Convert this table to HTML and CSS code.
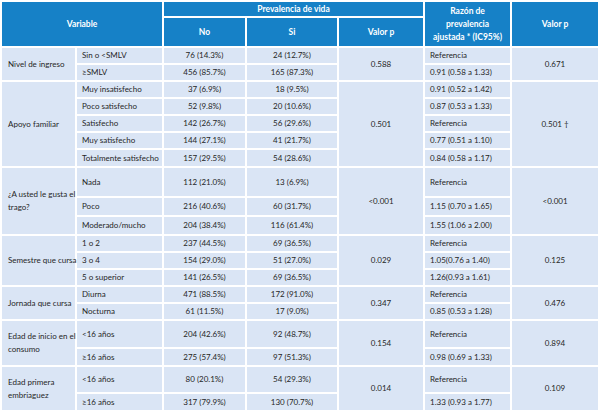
FILE: index.html
```html
<!DOCTYPE html>
<html lang="es">
<head>
<meta charset="utf-8">
<title>Tabla</title>
<link rel="stylesheet" href="styles.css">
</head>
<body>
<table class="t">
  <colgroup>
    <col class="c1"><col class="c2"><col class="c3"><col class="c4"><col class="c5"><col class="c6"><col class="c7">
  </colgroup>
  <thead>
    <tr class="hr1">
      <th colspan="2" rowspan="2">Variable</th>
      <th colspan="3">Prevalencia de vida</th>
      <th rowspan="2" class="raz">Razón de<br>prevalencia<br>ajustada * (IC95%)</th>
      <th rowspan="2">Valor p</th>
    </tr>
    <tr class="hr2">
      <th>No</th>
      <th>Si</th>
      <th>Valor p</th>
    </tr>
  </thead>
  <tbody>
    <tr class="r15">
      <td rowspan="2" class="var">Nivel de ingreso</td>
      <td class="cat">Sin o &lt;SMLV</td>
      <td class="num">76 (14.3%)</td>
      <td class="num">24 (12.7%)</td>
      <td rowspan="2" class="num">0.588</td>
      <td class="cat">Referencia</td>
      <td rowspan="2" class="num">0.671</td>
    </tr>
    <tr class="r15">
      <td class="cat">≥SMLV</td>
      <td class="num">456 (85.7%)</td>
      <td class="num">165 (87.3%)</td>
      <td class="cat">0.91 (0.58 a 1.33)</td>
    </tr>

    <tr class="r15">
      <td rowspan="5" class="var">Apoyo familiar</td>
      <td class="cat">Muy insatisfecho</td>
      <td class="num">37 (6.9%)</td>
      <td class="num">18 (9.5%)</td>
      <td rowspan="5" class="num">0.501</td>
      <td class="cat">0.91 (0.52 a 1.42)</td>
      <td rowspan="5" class="num">0.501 †</td>
    </tr>
    <tr class="r15">
      <td class="cat">Poco satisfecho</td>
      <td class="num">52 (9.8%)</td>
      <td class="num">20 (10.6%)</td>
      <td class="cat">0.87 (0.53 a 1.33)</td>
    </tr>
    <tr class="r15">
      <td class="cat">Satisfecho</td>
      <td class="num">142 (26.7%)</td>
      <td class="num">56 (29.6%)</td>
      <td class="cat">Referencia</td>
    </tr>
    <tr class="r15">
      <td class="cat">Muy satisfecho</td>
      <td class="num">144 (27.1%)</td>
      <td class="num">41 (21.7%)</td>
      <td class="cat">0.77 (0.51 a 1.10)</td>
    </tr>
    <tr class="r16">
      <td class="cat">Totalmente satisfecho</td>
      <td class="num">157 (29.5%)</td>
      <td class="num">54 (28.6%)</td>
      <td class="cat">0.84 (0.58 a 1.17)</td>
    </tr>

    <tr class="r28">
      <td rowspan="3" class="var">¿A usted le gusta el<br>trago?</td>
      <td class="cat">Nada</td>
      <td class="num">112 (21.0%)</td>
      <td class="num">13 (6.9%)</td>
      <td rowspan="3" class="num">&lt;0.001</td>
      <td class="cat">Referencia</td>
      <td rowspan="3" class="num">&lt;0.001</td>
    </tr>
    <tr class="r17">
      <td class="cat">Poco</td>
      <td class="num">216 (40.6%)</td>
      <td class="num">60 (31.7%)</td>
      <td class="cat">1.15 (0.70 a 1.65)</td>
    </tr>
    <tr class="r17">
      <td class="cat">Moderado/mucho</td>
      <td class="num">204 (38.4%)</td>
      <td class="num">116 (61.4%)</td>
      <td class="cat">1.55 (1.06 a 2.00)</td>
    </tr>

    <tr class="r15">
      <td rowspan="3" class="var">Semestre que cursa</td>
      <td class="cat">1 o 2</td>
      <td class="num">237 (44.5%)</td>
      <td class="num">69 (36.5%)</td>
      <td rowspan="3" class="num">0.029</td>
      <td class="cat">Referencia</td>
      <td rowspan="3" class="num">0.125</td>
    </tr>
    <tr class="r15">
      <td class="cat">3 o 4</td>
      <td class="num">154 (29.0%)</td>
      <td class="num">51 (27.0%)</td>
      <td class="cat">1.05(0.76 a 1.40)</td>
    </tr>
    <tr class="r15">
      <td class="cat">5 o superior</td>
      <td class="num">141 (26.5%)</td>
      <td class="num">69 (36.5%)</td>
      <td class="cat">1.26(0.93 a 1.61)</td>
    </tr>

    <tr class="r15">
      <td rowspan="2" class="var">Jornada que cursa</td>
      <td class="cat">Diurna</td>
      <td class="num">471 (88.5%)</td>
      <td class="num">172 (91.0%)</td>
      <td rowspan="2" class="num">0.347</td>
      <td class="cat">Referencia</td>
      <td rowspan="2" class="num">0.476</td>
    </tr>
    <tr class="r15">
      <td class="cat">Nocturna</td>
      <td class="num">61 (11.5%)</td>
      <td class="num">17 (9.0%)</td>
      <td class="cat">0.85 (0.53 a 1.28)</td>
    </tr>

    <tr class="r26">
      <td rowspan="2" class="var">Edad de inicio en el<br>consumo</td>
      <td class="cat">&lt;16 años</td>
      <td class="num">204 (42.6%)</td>
      <td class="num">92 (48.7%)</td>
      <td rowspan="2" class="num">0.154</td>
      <td class="cat">Referencia</td>
      <td rowspan="2" class="num">0.894</td>
    </tr>
    <tr class="r16">
      <td class="cat">≥16 años</td>
      <td class="num">275 (57.4%)</td>
      <td class="num">97 (51.3%)</td>
      <td class="cat">0.98 (0.69 a 1.33)</td>
    </tr>

    <tr class="r25">
      <td rowspan="2" class="var">Edad primera<br>embriaguez</td>
      <td class="cat">&lt;16 años</td>
      <td class="num">80 (20.1%)</td>
      <td class="num">54 (29.3%)</td>
      <td rowspan="2" class="num">0.014</td>
      <td class="cat">Referencia</td>
      <td rowspan="2" class="num">0.109</td>
    </tr>
    <tr class="r16">
      <td class="cat">≥16 años</td>
      <td class="num">317 (79.9%)</td>
      <td class="num">130 (70.7%)</td>
      <td class="cat">1.33 (0.93 a 1.77)</td>
    </tr>
  </tbody>
</table>
</body>
</html>
```
FILE: styles.css
```css
html, body {
  margin: 0;
  padding: 0;
  background: #ffffff;
}

body {
  font-family: Lato, "Open Sans", "Noto Sans", sans-serif;
}

.t {
  border-collapse: separate;
  border-spacing: 2px;
  table-layout: fixed;
  width: 600px;
}

.c1 { width: 73px; }
.c2 { width: 85px; }
.c3 { width: 81px; }
.c4 { width: 90px; }
.c5 { width: 84px; }
.c6 { width: 85px; }
.c7 { width: 86px; }

.t th,
.t td {
  padding: 0;
  border: 0;
  vertical-align: middle;
  white-space: nowrap;
}

.t th {
  background: #1681c7;
  color: #ffffff;
  font-weight: 700;
  font-size: 8.5px;
  line-height: 10px;
  text-align: center;
}

.t th.raz {
  line-height: 13px;
}

.hr1 th { height: 14px; }
.hr2 th { height: 28px; }

.t td {
  background: #dae5f5;
  color: #262626;
  font-size: 8px;
  line-height: 11px;
}

.t td.var {
  text-align: left;
  padding-left: 6px;
  line-height: 13px;
}

.t td.cat {
  text-align: left;
  padding-left: 5px;
}

.t td.num {
  text-align: center;
}

.r15 td { height: 15px; }
.r16 td { height: 16px; }
.r17 td { height: 17px; }
.r25 td { height: 25px; }
.r26 td { height: 26px; }
.r28 td { height: 28px; }
```
